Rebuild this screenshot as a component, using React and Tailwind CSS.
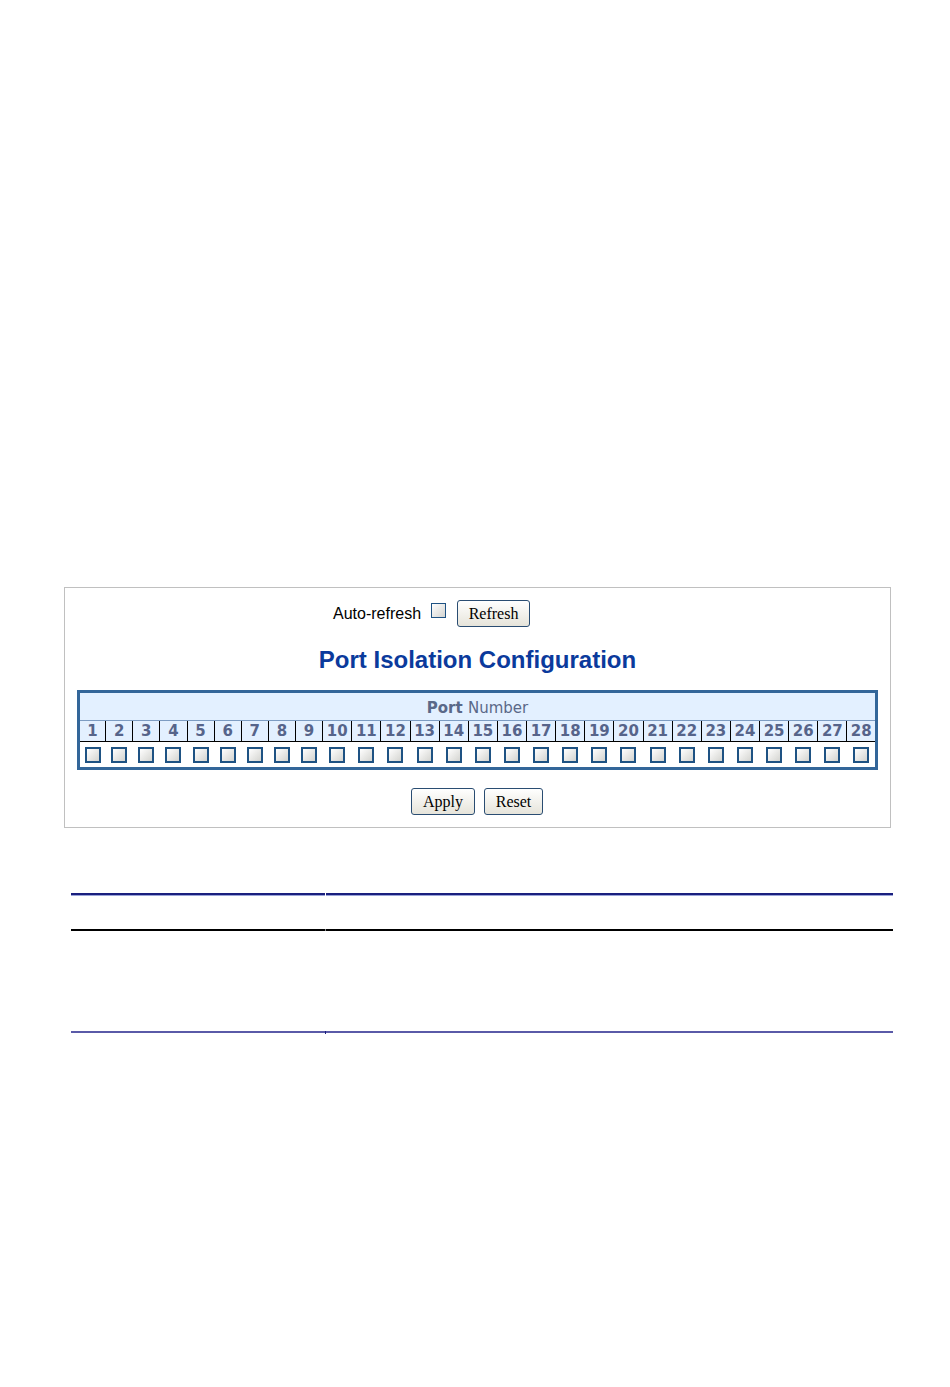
import React from 'react';

const ports = Array.from({ length: 28 }, (_, i) => i + 1);

const Box = ({ thick }) => (
  <span
    className={`inline-block w-[16px] h-[16px] bg-gradient-to-br from-white to-[#d4d4d0] ${
      thick ? 'border-2 border-[#1e5283]' : 'border border-[#1e5283]'
    }`}
  />
);

const Btn = ({ children, w }) => (
  <button
    className={`${w} h-[27px] rounded-[3px] border border-[#2a4d72] bg-gradient-to-b from-white to-[#e6e4da] text-[16px] text-black leading-none`}
    style={{ fontFamily: '"Liberation Serif", serif' }}
  >
    {children}
  </button>
);

export default function App() {
  return (
    <div className="w-[950px] h-[1387px] bg-white" style={{ fontFamily: '"Liberation Sans", Arial, sans-serif' }}>
      <div className="pt-[587px] pl-[64px]">
        <div className="w-[827px] h-[241px] border border-[#c0c0c0] flex flex-col">
          <div className="flex items-center mt-[12px] ml-[268px] h-[27px]">
            <span className="text-[16px] text-black">Auto-refresh</span>
            <span className="ml-[10px] -mt-[6px] inline-block w-[15px] h-[15px] border border-[#1e5283] bg-gradient-to-br from-white to-[#d4d4d0]" />
            <span className="ml-[11px]">
              <Btn w="w-[73px]">Refresh</Btn>
            </span>
          </div>

          <h1 className="mt-[19px] text-center text-[24px] leading-[28px] font-bold text-[#0b3a9c]">
            Port Isolation Configuration
          </h1>

          <div className="mt-[16px] mx-[12px]">
            <table
              className="w-full table-fixed border-collapse border-[3px] border-[#336699]"
              style={{ fontFamily: '"DejaVu Sans", Verdana, sans-serif' }}
            >
              <colgroup>
                {ports.map((p) => (
                  <col key={p} className={p < 10 ? 'w-[27px]' : 'w-[29px]'} />
                ))}
              </colgroup>
              <thead>
                <tr className="bg-[#e3f0ff]">
                  <th colSpan={28} className="h-[29px] pt-[3px] text-center text-[15px] text-[#5a6888] border-b border-[#7d9cc2]">
                    <span className="font-bold">Port</span> <span className="font-normal">Number</span>
                  </th>
                </tr>
                <tr className="bg-[#e3f0ff]">
                  {ports.map((p) => (
                    <th
                      key={p}
                      className="h-[20px] p-0 text-center text-[15px] leading-[20px] font-bold text-[#56648a] border-l border-black first:border-l-0 border-b border-b-black"
                    >
                      {p}
                    </th>
                  ))}
                </tr>
              </thead>
              <tbody>
                <tr>
                  {ports.map((p) => (
                    <td key={p} className="h-[27px] p-0 text-center align-middle">
                      <span className="flex justify-center">
                        <Box thick />
                      </span>
                    </td>
                  ))}
                </tr>
              </tbody>
            </table>
          </div>

          <div className="mt-[18px] flex justify-center gap-[9px] pr-[1px]">
            <Btn w="w-[64px]">Apply</Btn>
            <Btn w="w-[59px]">Reset</Btn>
          </div>
        </div>
      </div>

      <div className="ml-[71px] w-[822px] mt-[65px]">
        <div className="flex">
          <div className="w-[254px] h-[2px] bg-[#1a1f7e] border-b border-[#9aa3d8] box-content" />
          <div className="w-[1px]" />
          <div className="flex-1 h-[2px] bg-[#1a1f7e] border-b border-[#9aa3d8] box-content" />
        </div>
        <div className="flex mt-[33px]">
          <div className="w-[254px] h-[2px] bg-black" />
          <div className="w-[1px] h-[2px] bg-[#888]" />
          <div className="flex-1 h-[2px] bg-black" />
        </div>
        <div className="flex mt-[100px]">
          <div className="w-[254px] h-[2px] bg-[#5a5aa8]" />
          <div className="w-[1px] h-[3px] bg-[#1a1f7e]" />
          <div className="flex-1 h-[2px] bg-[#5a5aa8]" />
        </div>
      </div>
    </div>
  );
}
